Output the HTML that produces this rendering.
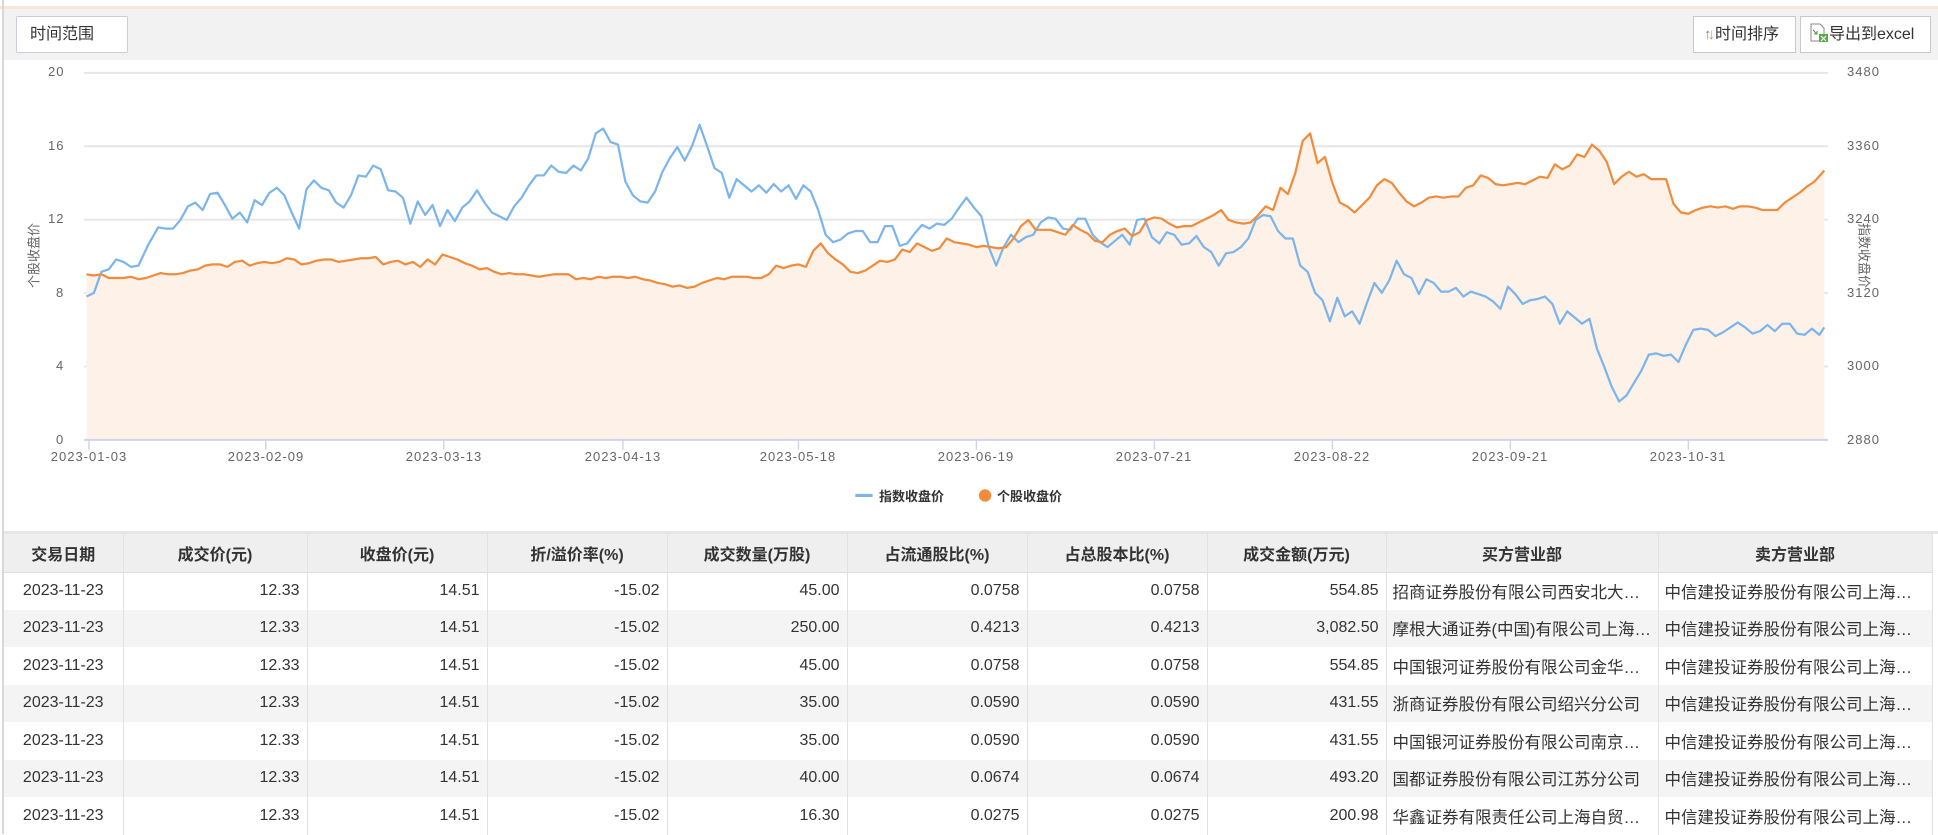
<!DOCTYPE html>
<html><head><meta charset="utf-8"><style>
*{margin:0;padding:0;box-sizing:border-box}
body{width:1938px;height:834px;overflow:hidden;background:#fff;font-family:"Liberation Sans","Noto Sans CJK SC",sans-serif;position:relative;color:#333}
.abs{position:absolute}
.btn{position:absolute;top:16px;height:37px;background:#fff;border:1px solid #c8c8c8;font-size:16px;line-height:35px;color:#333}
.yl{position:absolute;font-size:13px;color:#666;letter-spacing:1px}
.xl{position:absolute;top:449px;font-size:13px;color:#666;letter-spacing:1px;width:120px;text-align:center}
table{position:absolute;left:4px;top:534px;border-collapse:collapse;font-size:16px;table-layout:fixed;width:1928px}
td,th{height:37.5px;border-right:1px solid #e2e2e2;white-space:nowrap;overflow:hidden;text-overflow:ellipsis;padding:0 7px}
th{background:#efefef;font-weight:bold;text-align:center;border-bottom:1px solid #ddd;height:38px}
td{text-align:right}
td.c{text-align:center}td.l{text-align:left;font-size:16.5px;padding:0 6px}
td.s{padding-right:10px}
tr:nth-child(odd) td{background:#f4f4f4}
</style></head><body>
<div class="abs" style="left:0;top:6px;width:1938px;height:3px;background:#fbe5d6"></div>
<div class="abs" style="left:3px;top:9px;width:1935px;height:51px;background:#f2f2f2"></div>
<div class="abs" style="left:2px;top:0;width:2px;height:834px;background:#d8d8d8"></div>
<div class="btn" style="left:16px;width:112px;padding-left:13px;border-radius:2px;border-color:#ccd">时间范围</div>
<div class="btn" style="left:1693px;width:103px;padding-left:10px"><span style="font-size:15px;color:#888;font-weight:bold">↑</span><span style="font-size:15px;color:#f08c3c;margin-left:-4px;font-weight:bold">↓</span>时间排序</div>
<div class="btn" style="left:1800px;width:131px;padding-left:8px">
<svg width="20" height="20" viewBox="0 0 20 20" style="vertical-align:-4px"><path d="M2 1h9l4 4v13H2z" fill="#fff" stroke="#888"/><path d="M4 7l4 4M8 8v3H5" stroke="#4a9a3a" fill="none"/><rect x="10" y="11" width="9" height="8" fill="#5aaa4a"/><path d="M12 13l5 5M17 13l-5 5" stroke="#fff"/></svg>导出到excel</div>

<svg class="abs" style="left:0;top:0" width="1938" height="834" viewBox="0 0 1568 675" preserveAspectRatio="none">
<g stroke="#e6e6e6" stroke-width="1.6"><line x1="68" y1="59" x2="1479" y2="59"/><line x1="68" y1="118.4" x2="1479" y2="118.4"/><line x1="68" y1="177.8" x2="1479" y2="177.8"/><line x1="68" y1="237.2" x2="1479" y2="237.2"/><line x1="68" y1="296.6" x2="1479" y2="296.6"/></g>
<polygon fill="#fdf1e8" points="70,356 70,222 76,223 82,222 88,225 94,225 100,225 106,224 112,226 118,225 124,223 130,221 136,222 142,222 148,221 154,219 160,218 166,215 172,214 178,214 184,216 190,212 196,211 202,215 208,213 214,212 220,213 226,212 232,209 238,210 244,214 250,213 256,211 262,210 268,210 274,212 280,211 286,210 292,209 298,209 304,208 310,214 316,212 322,211 328,214 334,212 340,216 346,210 352,214 358,206 364,208 370,210 376,213 382,215 388,218 394,217 400,220 406,222 412,221 418,222 424,222 430,223 436,224 442,223 448,222 454,222 460,222 466,226 472,225 478,226 484,224 490,225 496,224 502,224 508,225 514,224 520,226 526,227 532,229 538,230 544,232 550,231 556,233 562,232 568,229 574,227 580,225 586,226 592,224 598,224 604,224 610,225 616,225 622,222 628,215 634,217 640,215 646,214 652,216 658,203 664,197 670,205 676,210 682,214 688,220 694,221 700,219 706,215 712,211 718,212 724,210 730,202 736,204 742,197 748,200 754,203 760,201 766,193 772,196 778,197 784,198 790,200 796,199 802,200 808,201 814,200 820,193 826,183 832,178 838,186 844,186 850,186 856,188 862,190 868,182 874,186 880,189 886,195 892,196 898,190 904,187 910,185 916,191 922,188 928,178 934,176 940,177 946,181 952,184 958,183 964,183 970,180 976,177 982,174 988,170 994,178 1000,180 1006,181 1012,180 1018,174 1024,167 1030,170 1036,152 1042,157 1048,140 1054,114 1060,108 1066,132 1072,127 1078,148 1084,164 1090,167 1096,172 1102,166 1108,160 1114,150 1120,145 1126,148 1132,156 1138,163 1144,167 1150,164 1156,160 1162,159 1168,160 1174,159 1180,159 1186,152 1192,150 1198,142 1204,144 1210,149 1216,150 1222,149 1228,148 1234,149 1240,146 1246,143 1252,144 1258,133 1264,137 1270,134 1276,125 1282,127 1288,117 1294,122 1300,131 1306,149 1312,143 1318,139 1324,143 1330,141 1336,145 1342,145 1348,145 1354,165 1360,172 1366,173 1372,170 1378,168 1384,167 1390,168 1396,167 1402,169 1408,167 1414,167 1420,168 1426,170 1432,170 1438,170 1444,164 1450,160 1456,156 1462,151 1468,147 1476,138 1476,356"/>
<line x1="68" y1="356" x2="1479" y2="356" stroke="#ccd6eb" stroke-width="1.6"/>
<g stroke="#ccd6eb" stroke-width="1.2"><line x1="72" y1="356" x2="72" y2="364"/><line x1="215" y1="356" x2="215" y2="364"/><line x1="359" y1="356" x2="359" y2="364"/><line x1="504" y1="356" x2="504" y2="364"/><line x1="646" y1="356" x2="646" y2="364"/><line x1="790" y1="356" x2="790" y2="364"/><line x1="934" y1="356" x2="934" y2="364"/><line x1="1078" y1="356" x2="1078" y2="364"/><line x1="1222" y1="356" x2="1222" y2="364"/><line x1="1366" y1="356" x2="1366" y2="364"/></g>
<polyline fill="none" stroke="#7cb5ec" stroke-width="1.8" stroke-linejoin="round" points="70,240 76,237 82,220 88,218 94,210 100,212 106,216 112,215 120,198 128,184 134,185 140,185 146,178 152,167 158,164 164,170 170,157 176,156 182,166 188,177 194,172 200,180 206,162 212,166 218,156 224,152 230,158 236,172 242,185 248,153 254,146 260,152 266,154 272,164 278,168 284,158 290,142 296,143 302,134 308,137 314,154 320,155 326,160 332,181 338,163 344,174 350,166 356,183 362,170 368,179 374,168 380,163 386,154 392,164 398,172 404,175 410,178 416,167 422,160 428,150 434,142 440,142 446,134 452,139 458,140 464,134 470,138 476,128 482,108 488,104 494,115 500,117 506,147 512,158 518,163 524,164 530,155 536,139 542,128 548,119 554,130 560,118 566,101 572,118 578,136 584,140 590,160 596,145 602,150 608,155 614,150 620,156 626,149 632,155 638,150 644,161 650,150 656,155 662,170 668,190 674,196 680,194 686,189 692,187 698,187 704,196 710,196 716,183 722,183 728,199 734,197 740,189 746,182 752,185 758,181 764,182 770,177 776,168 782,160 788,168 794,175 800,200 806,215 812,200 818,190 824,196 830,192 836,190 842,180 848,176 854,177 860,185 866,186 872,177 878,177 884,190 890,196 896,200 902,195 908,190 914,198 920,178 926,177 932,192 938,197 944,188 950,190 956,198 962,197 968,191 974,200 980,204 986,215 992,205 998,204 1004,200 1010,193 1016,178 1022,174 1028,175 1034,187 1040,193 1046,193 1052,215 1058,220 1064,237 1070,243 1076,260 1082,241 1088,256 1094,252 1100,262 1106,245 1112,229 1118,237 1124,227 1130,211 1136,222 1142,225 1148,238 1154,226 1160,229 1166,236 1172,236 1178,233 1184,240 1190,236 1196,238 1202,240 1208,244 1214,250 1220,232 1226,238 1232,246 1238,243 1244,242 1250,240 1256,246 1262,262 1268,252 1274,257 1280,262 1286,258 1292,282 1298,297 1304,313 1310,325 1316,320 1322,310 1328,300 1334,287 1340,286 1346,288 1352,287 1358,293 1364,279 1370,267 1376,266 1382,267 1388,272 1394,269 1400,265 1406,261 1412,265 1418,270 1424,268 1430,263 1436,268 1442,262 1448,262 1454,270 1460,271 1466,266 1472,271 1476,265"/>
<polyline fill="none" stroke="#f08c3c" stroke-width="1.8" stroke-linejoin="round" points="70,222 76,223 82,222 88,225 94,225 100,225 106,224 112,226 118,225 124,223 130,221 136,222 142,222 148,221 154,219 160,218 166,215 172,214 178,214 184,216 190,212 196,211 202,215 208,213 214,212 220,213 226,212 232,209 238,210 244,214 250,213 256,211 262,210 268,210 274,212 280,211 286,210 292,209 298,209 304,208 310,214 316,212 322,211 328,214 334,212 340,216 346,210 352,214 358,206 364,208 370,210 376,213 382,215 388,218 394,217 400,220 406,222 412,221 418,222 424,222 430,223 436,224 442,223 448,222 454,222 460,222 466,226 472,225 478,226 484,224 490,225 496,224 502,224 508,225 514,224 520,226 526,227 532,229 538,230 544,232 550,231 556,233 562,232 568,229 574,227 580,225 586,226 592,224 598,224 604,224 610,225 616,225 622,222 628,215 634,217 640,215 646,214 652,216 658,203 664,197 670,205 676,210 682,214 688,220 694,221 700,219 706,215 712,211 718,212 724,210 730,202 736,204 742,197 748,200 754,203 760,201 766,193 772,196 778,197 784,198 790,200 796,199 802,200 808,201 814,200 820,193 826,183 832,178 838,186 844,186 850,186 856,188 862,190 868,182 874,186 880,189 886,195 892,196 898,190 904,187 910,185 916,191 922,188 928,178 934,176 940,177 946,181 952,184 958,183 964,183 970,180 976,177 982,174 988,170 994,178 1000,180 1006,181 1012,180 1018,174 1024,167 1030,170 1036,152 1042,157 1048,140 1054,114 1060,108 1066,132 1072,127 1078,148 1084,164 1090,167 1096,172 1102,166 1108,160 1114,150 1120,145 1126,148 1132,156 1138,163 1144,167 1150,164 1156,160 1162,159 1168,160 1174,159 1180,159 1186,152 1192,150 1198,142 1204,144 1210,149 1216,150 1222,149 1228,148 1234,149 1240,146 1246,143 1252,144 1258,133 1264,137 1270,134 1276,125 1282,127 1288,117 1294,122 1300,131 1306,149 1312,143 1318,139 1324,143 1330,141 1336,145 1342,145 1348,145 1354,165 1360,172 1366,173 1372,170 1378,168 1384,167 1390,168 1396,167 1402,169 1408,167 1414,167 1420,168 1426,170 1432,170 1438,170 1444,164 1450,160 1456,156 1462,151 1468,147 1476,138"/>
<line x1="692" y1="401" x2="706" y2="401" stroke="#7cb5ec" stroke-width="2.5"/>
<circle cx="797" cy="401" r="5" fill="#f08c3c"/>
</svg>

<div class="yl" style="left:48px;top:64px">20</div>
<div class="yl" style="left:48px;top:138px">16</div>
<div class="yl" style="left:48px;top:211px">12</div>
<div class="yl" style="left:56px;top:285px">8</div>
<div class="yl" style="left:56px;top:358px">4</div>
<div class="yl" style="left:56px;top:432px">0</div>
<div class="yl" style="left:1847px;top:64px">3480</div>
<div class="yl" style="left:1847px;top:138px">3360</div>
<div class="yl" style="left:1847px;top:211px">3240</div>
<div class="yl" style="left:1847px;top:285px">3120</div>
<div class="yl" style="left:1847px;top:358px">3000</div>
<div class="yl" style="left:1847px;top:432px">2880</div>
<div class="abs" style="left:-2px;top:246px;width:70px;font-size:13px;color:#666;transform:rotate(-90deg);text-align:center">个股收盘价</div>
<div class="abs" style="left:1830px;top:246px;width:70px;font-size:13px;color:#666;transform:rotate(90deg);text-align:center">指数收盘价</div>
<div class="xl" style="left:29px">2023-01-03</div>
<div class="xl" style="left:206px">2023-02-09</div>
<div class="xl" style="left:384px">2023-03-13</div>
<div class="xl" style="left:563px">2023-04-13</div>
<div class="xl" style="left:738px">2023-05-18</div>
<div class="xl" style="left:916px">2023-06-19</div>
<div class="xl" style="left:1094px">2023-07-21</div>
<div class="xl" style="left:1272px">2023-08-22</div>
<div class="xl" style="left:1450px">2023-09-21</div>
<div class="xl" style="left:1628px">2023-10-31</div>
<div class="abs" style="left:879px;top:486px;font-size:13px;font-weight:bold;color:#333">指数收盘价</div>
<div class="abs" style="left:997px;top:486px;font-size:13px;font-weight:bold;color:#333">个股收盘价</div>
<div class="abs" style="left:4px;top:531px;width:1934px;height:3px;background:#e6e6e6"></div>

<table>
<colgroup><col style="width:119px"><col style="width:184px"><col style="width:180px"><col style="width:180px"><col style="width:180px"><col style="width:180px"><col style="width:180px"><col style="width:179px"><col style="width:272px"><col style="width:274px"></colgroup>
<tr><th>交易日期</th><th>成交价(元)</th><th>收盘价(元)</th><th>折/溢价率(%)</th><th>成交数量(万股)</th><th>占流通股比(%)</th><th>占总股本比(%)</th><th>成交金额(万元)</th><th>买方营业部</th><th>卖方营业部</th></tr>
<tr><td class="c">2023-11-23</td><td>12.33</td><td>14.51</td><td>-15.02</td><td>45.00</td><td>0.0758</td><td>0.0758</td><td>554.85</td><td class="l">招商证券股份有限公司西安北大街证券营业部</td><td class="l s">中信建投证券股份有限公司上海分公司</td></tr>
<tr><td class="c">2023-11-23</td><td>12.33</td><td>14.51</td><td>-15.02</td><td>250.00</td><td>0.4213</td><td>0.4213</td><td>3,082.50</td><td class="l">摩根大通证券(中国)有限公司上海分公司</td><td class="l s">中信建投证券股份有限公司上海分公司</td></tr>
<tr><td class="c">2023-11-23</td><td>12.33</td><td>14.51</td><td>-15.02</td><td>45.00</td><td>0.0758</td><td>0.0758</td><td>554.85</td><td class="l">中国银河证券股份有限公司金华证券营业部</td><td class="l s">中信建投证券股份有限公司上海分公司</td></tr>
<tr><td class="c">2023-11-23</td><td>12.33</td><td>14.51</td><td>-15.02</td><td>35.00</td><td>0.0590</td><td>0.0590</td><td>431.55</td><td class="l">浙商证券股份有限公司绍兴分公司</td><td class="l s">中信建投证券股份有限公司上海分公司</td></tr>
<tr><td class="c">2023-11-23</td><td>12.33</td><td>14.51</td><td>-15.02</td><td>35.00</td><td>0.0590</td><td>0.0590</td><td>431.55</td><td class="l">中国银河证券股份有限公司南京证券营业部</td><td class="l s">中信建投证券股份有限公司上海分公司</td></tr>
<tr><td class="c">2023-11-23</td><td>12.33</td><td>14.51</td><td>-15.02</td><td>40.00</td><td>0.0674</td><td>0.0674</td><td>493.20</td><td class="l">国都证券股份有限公司江苏分公司</td><td class="l s">中信建投证券股份有限公司上海分公司</td></tr>
<tr><td class="c">2023-11-23</td><td>12.33</td><td>14.51</td><td>-15.02</td><td>16.30</td><td>0.0275</td><td>0.0275</td><td>200.98</td><td class="l">华鑫证券有限责任公司上海自贸试验区分公司</td><td class="l s">中信建投证券股份有限公司上海分公司</td></tr>
</table>
</body></html>
